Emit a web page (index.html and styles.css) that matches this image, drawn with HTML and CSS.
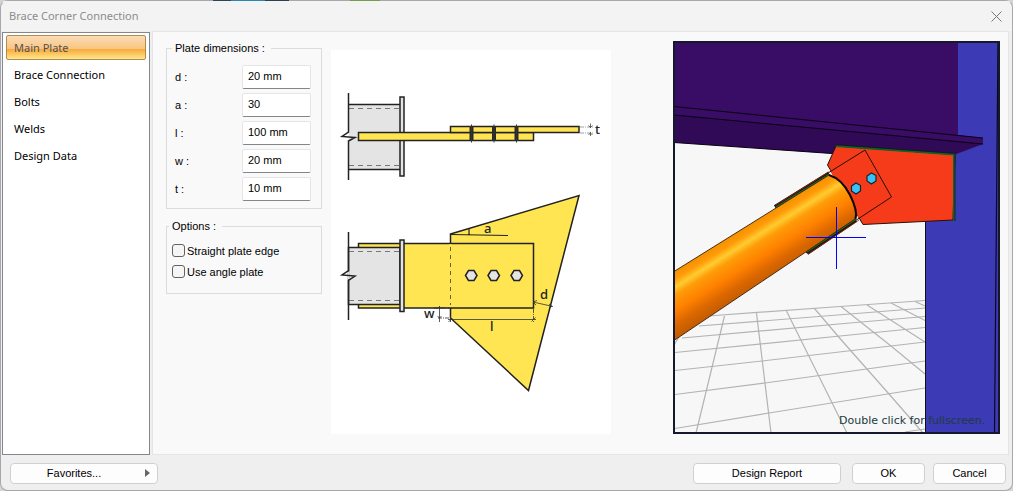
FILE: index.html
```html
<!DOCTYPE html>
<html lang="en">
<head>
<meta charset="utf-8">
<title>Brace Corner Connection</title>
<link rel="stylesheet" href="styles.css">
</head>
<body>
<div class="dialog">
  <header class="titlebar">
    <h1 class="title">Brace Corner Connection</h1>
    <button class="close" type="button" aria-label="Close">
      <svg width="11" height="11" viewBox="0 0 11 11"><path d="M.5 .5 10.5 10.5M10.5 .5 .5 10.5" fill="none" stroke="#777" stroke-width="1"/></svg>
    </button>
  </header>
  <main class="content">
    <nav class="sidebar">
      <button class="tab tab-active" type="button">Main Plate</button>
      <button class="tab" type="button">Brace Connection</button>
      <button class="tab" type="button">Bolts</button>
      <button class="tab" type="button">Welds</button>
      <button class="tab" type="button">Design Data</button>
    </nav>
    <section class="panel">
      <form class="settings">
        <fieldset class="group dimensions">
          <legend>Plate dimensions :</legend>
          <div class="field"><label for="d">d :</label><input id="d" type="text" value="20 mm"></div>
          <div class="field"><label for="a">a :</label><input id="a" type="text" value="30"></div>
          <div class="field"><label for="l">l :</label><input id="l" type="text" value="100 mm"></div>
          <div class="field"><label for="w">w :</label><input id="w" type="text" value="20 mm"></div>
          <div class="field"><label for="t">t :</label><input id="t" type="text" value="10 mm"></div>
        </fieldset>
        <fieldset class="group options">
          <legend>Options :</legend>
          <label class="check"><input type="checkbox">Straight plate edge</label>
          <label class="check"><input type="checkbox">Use angle plate</label>
        </fieldset>
      </form>
      <svg class="diagram" viewBox="331 50 280 384" role="img" aria-label="Plate dimension diagram">
        <g fill="#e4e4e4" stroke="#222" stroke-width="1.5">
          <path d="M348.500 104.500H400V169.500H348.500Z" stroke="none"/>
          <path d="M348.500 104.500H400M348.500 169.500H400" fill="none"/>
          <path d="M349 108.500H399M349 165.500H399" fill="none" stroke="#777" stroke-width="1" stroke-dasharray="5 4"/>
          <path d="M348.500 93V132L342 136.500L355 137.500L348.500 141V180" fill="none"/>
          <rect x="400" y="97" width="4" height="79"/>
          <rect x="358.500" y="132.500" width="175" height="8" fill="#ffe552"/>
          <rect x="450.500" y="126.500" width="128.500" height="6" fill="#ffe552"/>
        </g>
        <path d="M471.500 126V141M494 126V141M516.500 126V141" stroke="#2a2a2a" stroke-width="4"/>
        <path d="M471.500 124.500V142.500M494 124.500V142.500M516.500 124.500V142.500" stroke="#333"/>
        <path d="M580 127H594M580 133H594" stroke="#888" stroke-width=".8" stroke-dasharray="4 1 1 1"/>
        <path d="M590.500 123.500V128M588.500 125.500l2 2 2-2M590.500 132V136M588.500 135l2-2 2 2" fill="none" stroke="#444" stroke-width=".8"/>
        <g stroke="#222" stroke-width="1.500">
          <path d="M450.500 234L579 195.500L528.500 390.500L450.500 318Z" fill="#ffe552"/>
          <rect x="358.500" y="243.500" width="175" height="64.500" fill="#ffe552"/>
          <path d="M348.500 247.500H400V304.500H348.500Z" fill="#e4e4e4"/>
          <path d="M349 251.500H399M349 300.500H399" stroke="#777" stroke-width="1" stroke-dasharray="5 4"/>
          <path d="M348.500 271.500V279.500" stroke="#e4e4e4" stroke-width="2"/>
          <path d="M348.500 232V270.500L342 275L355 276L348.500 280.500V320" fill="none"/>
          <rect x="400" y="240" width="4" height="71.500" fill="#e4e4e4"/>
          <path d="M450.500 234.500L508 235.500M469 229V234.500" fill="none" stroke-width="1.200"/>
          <g fill="#e4e4e4">
            <path d="M465.500 275.500l3-5h5.500l3 5-3 5h-5.500zM488 275.500l3-5h5.500l3 5-3 5h-5.500zM511 275.500l3-5h5.500l3 5-3 5h-5.500z"/>
          </g>
        </g>
        <path d="M450.500 244V307" stroke="#ffe552" stroke-width="2"/>
        <path d="M450.500 247V305" stroke="#66602c" stroke-dasharray="4 4"/>
        <path d="M533.500 309V322" stroke="#333" stroke-width=".8" stroke-dasharray="4 1 1 1"/>
        <g fill="none" stroke="#333" stroke-width=".8">
          <path d="M448 319.500H536M450.500 316V322M452.500 318l-4 4M535.500 317.500l-4 4M533 302L553 306.500M537 300.500l-4 1.500 3 3M549 304l3 2.300-3 1.500M439.500 306V322M437.500 308.500l2-2 2 2M437.500 316l2 2 2-2"/>
          <path d="M434 308H449M438 318H450" stroke-dasharray="4 1 1 1"/>
        </g>
        <g class="dim-text">
          <text x="595" y="134">t</text><text x="484" y="233">a</text>
          <text x="540" y="299">d</text><text x="490" y="331">l</text><text x="424" y="318">w</text>
        </g>
      </svg>
      <svg class="preview" viewBox="673 41 327 393" role="img" aria-label="3D preview of the connection">
        <defs>
          <linearGradient id="pipe" gradientUnits="userSpaceOnUse" x1="752" y1="223" x2="782" y2="271">
            <stop offset="0" stop-color="#f59000"/><stop offset=".12" stop-color="#ff9a08"/>
            <stop offset=".24" stop-color="#ffcc30"/><stop offset=".36" stop-color="#ff9c08"/>
            <stop offset=".6" stop-color="#ff8000"/><stop offset=".8" stop-color="#dc6800"/>
            <stop offset="1" stop-color="#c45c00"/>
          </linearGradient>
        </defs>
        <rect x="673" y="41" width="327" height="393" fill="#f7f7f7"/>
        <g fill="none" stroke="#b1b4b1" stroke-width="1.200">
          <path d="M708 316L840 306.500L925 300.500M699 326L850 314L925 308M682 338L850 323L925 316.500M675 352.500L850 335L925 327.500M675 370.500L762 361L925 342M675 394.500L765 383L925 361M675 428.500L769 413L925 388M905 432L925 429"/>
          <path d="M679 337L674 345M724.500 316L696 433M756.500 313L771 433M786.500 311L847 433M814.500 308.500L840 338.500L889 394L923 433M841 306.500L891 346L925 374M867 305L925 342M891 303L925 320.500M915 301.500L925 306"/>
        </g>
        <path d="M958 42H999V433H925V200L950 150Z" fill="#3c3bb5"/>
        <path d="M925.500 220V433" stroke="#111" stroke-width="1"/>
        <path d="M998 42L994.500 433" stroke="#080820" stroke-width="1.200"/>
        <path d="M674 42H958V135L983 138V144L955 149L674 130Z" fill="#390d65"/>
        <path d="M674 115L983 144L955 154.500L831 153.500L674 142.500Z" fill="#300a57"/>
        <path d="M674 106.500L983 138M674 115L983 144M674 142.500L832 153.500" stroke="#090212" fill="none"/>
        <path d="M836 146L955 154.500L953 220L863 224.500L827.500 165Z" fill="#f53b19" stroke="#241006"/>
        <path d="M836 146L955 154.500" stroke="#0d6426" stroke-width="2"/>
        <path d="M954 155V221" stroke="#0d6426" stroke-width="2"/>
        <path d="M835 144.700L955 153.400V221" fill="none" stroke="#101410" stroke-width=".7"/>
        <path d="M830 171L865 150L891.500 197L859 218Z" fill="#f53b19"/>
        <path d="M775 206L865 150L891.500 197L806 253" fill="none" stroke="#241006" stroke-width="1"/>
        <path d="M775 207L829 173.500M807 253L856 220" stroke="#241006" stroke-width="4"/>
        <path d="M776 207.300L829 174.500M807 251.800L856 219" stroke="#176c34" stroke-width="1.600"/>
        <path d="M776 205L829 171.800M808 254L859 220" stroke="#8c2b1c" stroke-width=".8"/>
        <path d="M674 271.500L829 175Q842 179 850 195Q858 211 855 219L674 340.500Z" fill="url(#pipe)"/>
        <path d="M674 271.500L829 175M855 219L674 340.500" stroke="#382010" stroke-width=".9"/>
        <path d="M829 175Q842 179 850 195Q858 211 855.500 219" fill="none" stroke="#080400" stroke-width="2"/>
        <g fill="#38c3f8" stroke="#15252c" stroke-width="1.200">
          <path d="M851.500 186l4.500-3 4.500 2.500v5.500l-4.500 3-4.500-3zM867 176l4.500-3 4.500 2.500v5.500l-4.500 3-4.500-3z"/>
        </g>
        <path d="M836.500 207V269M806 237.500H866" stroke="#00f" fill="none"/>
        <rect x="674" y="42" width="325" height="391" fill="none" stroke="#16182c" stroke-width="2"/>
        <text class="hint" x="839" y="424">Double click for fullscreen.</text>
      </svg>
    </section>
  </main>
  <footer class="footer">
    <button class="btn btn-wide btn-menu" type="button"><span>Favorites...</span><svg width="5" height="8" viewBox="0 0 5 8"><path d="M0 0 5 4 0 8z" fill="#666"/></svg></button>
    <button class="btn btn-wide btn-report" type="button">Design Report</button>
    <button class="btn btn-ok" type="button">OK</button>
    <button class="btn" type="button">Cancel</button>
  </footer>
</div>
</body>
</html>
```
FILE: styles.css
```css
* { box-sizing: border-box; }
body {
  margin: 0;
  background: #d4d4d4;
  color: #000;
  font: 11px/16px "Noto Sans", "Open Sans", sans-serif;
}
button, input { font: inherit; color: inherit; }
.dialog {
  display: flex;
  flex-direction: column;
  height: 100vh;
  border: 1px solid #a8a8a8;
  border-top-color: transparent;
  border-radius: 8px;
  background:
    linear-gradient(90deg, #a8a8a8 213px, #2c4658 213px 231px, #2b86b4 231px 265px, #2c4054 265px 289px, #a8a8a8 289px 350px, #6f9f4a 350px 380px, #a8a8a8 380px) border-box 0 0 / 100% 1px no-repeat,
    #efefef;
  overflow: hidden;
}
.titlebar {
  display: flex;
  align-items: center;
  justify-content: space-between;
  height: 30px;
  padding: 0 10px 0 8px;
  background: #f3f3f3;
}
.title { margin: 0; font-size: 11px; font-weight: 400; color: #8c8c8c; }
.close { display: flex; padding: 0; border: 0; background: none; }
.content { display: flex; flex: 1; gap: 2px; padding: 0 3px 0 1px; min-height: 0; }
.sidebar {
  display: flex;
  flex-direction: column;
  gap: 2px;
  width: 148px;
  margin-top: 1px;
  padding: 2px 3px;
  border: 1px solid #828790;
  background: #fff;
}
.tab {
  height: 25px;
  padding: 0 7px;
  border: 1px solid transparent;
  border-radius: 2px;
  background: none;
  text-align: left;
}
.tab-active {
  border-color: #b48a4b;
  background: linear-gradient(#f9dcb9, #fbc580 55%, #f8a63c 56%, #fcd26a 85%, #ffe796);
  color: #50505a;
}
.panel {
  display: flex;
  flex: 1;
  align-items: flex-start;
  padding: 8px 8px 0 13px;
  border: 1px solid #e5e5e5;
  background: #f9f9f9;
}
.settings, .footer { font-family: "Liberation Sans", Arial, sans-serif; }
.settings { display: flex; flex-direction: column; gap: 9px; width: 156px; }
.group { margin: 0; border: 1px solid #dcdcdc; }
.group legend { height: 16px; margin-left: -3px; padding: 0 6px 0 3px; }
.dimensions { padding: 7px 10px 5px 8px; }
.options { padding: 6px 8px 11px 5px; }
.field { display: flex; align-items: center; justify-content: space-between; height: 28px; }
.field input {
  width: 69px;
  height: 24px;
  padding: 0 5px 3px;
  border: 1px solid #e5e5e5;
  border-bottom-color: #868686;
  border-radius: 2px;
  background: #fff;
}
.check { display: flex; align-items: center; gap: 2px; height: 21px; }
.check input {
  appearance: none;
  width: 13px;
  height: 13px;
  margin: 0;
  border: 1px solid #626262;
  border-radius: 3px;
  background: #f5f5f5;
}
.diagram { width: 280px; height: 384px; margin: 10px 0 0 9px; background: #fff; }
.preview { width: 327px; height: 393px; margin: 1px 0 0 auto; }
.dim-text { fill: #222; font: 500 13px "Noto Sans", sans-serif; }
.hint { fill: #223a40; font: 11px "DejaVu Sans", sans-serif; }
.footer { display: flex; align-items: center; height: 35px; padding: 0 6px 0 9px; }
.btn {
  width: 73px;
  height: 21px;
  margin-top: 1px;
  padding: 0;
  border: 1px solid #d0d0d0;
  border-radius: 4px;
  background: #fdfdfd;
}
.btn-wide { width: 148px; }
.btn-menu { display: flex; align-items: center; padding: 0 7px 0 0; }
.btn-menu span { flex: 1; padding-right: 8px; }
.btn-report { margin-left: auto; }
.btn-ok { margin: 1px 8px 0 11px; }
```
